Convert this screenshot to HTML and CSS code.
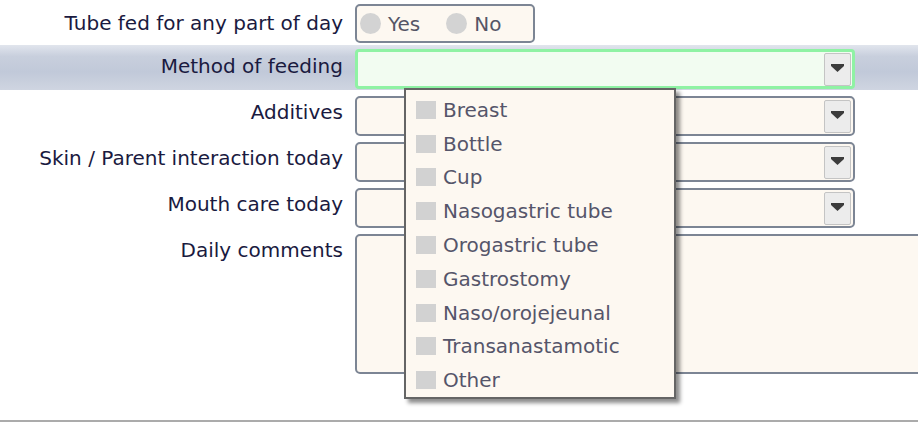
FILE: index.html
```html
<!DOCTYPE html>
<html>
<head>
<meta charset="utf-8">
<link rel="stylesheet" href="styles.css">
</head>
<body>
<div class="form">
  <div class="row row-first">
    <div class="label">Tube fed for any part of day</div>
    <div class="radio-box">
      <span class="radio"></span><span class="opt">Yes</span>
      <span class="radio radio-2"></span><span class="opt">No</span>
    </div>
  </div>
  <div class="row band">
    <div class="label">Method of feeding</div>
    <div class="select select-active">
      <span class="btn"><svg width="13" height="8" viewBox="0 0 13 8"><path d="M0 0h13v2l-6.5 6L0 2z" fill="#3c3c3c"/></svg></span>
    </div>
  </div>
  <div class="row">
    <div class="label">Additives</div>
    <div class="select">
      <span class="btn"><svg width="13" height="8" viewBox="0 0 13 8"><path d="M0 0h13v2l-6.5 6L0 2z" fill="#3c3c3c"/></svg></span>
    </div>
  </div>
  <div class="row">
    <div class="label">Skin / Parent interaction today</div>
    <div class="select">
      <span class="btn"><svg width="13" height="8" viewBox="0 0 13 8"><path d="M0 0h13v2l-6.5 6L0 2z" fill="#3c3c3c"/></svg></span>
    </div>
  </div>
  <div class="row">
    <div class="label">Mouth care today</div>
    <div class="select">
      <span class="btn"><svg width="13" height="8" viewBox="0 0 13 8"><path d="M0 0h13v2l-6.5 6L0 2z" fill="#3c3c3c"/></svg></span>
    </div>
  </div>
  <div class="row">
    <div class="label">Daily comments</div>
    <div class="textarea"></div>
  </div>
  <div class="rule"></div>

  <ul class="menu">
    <li><span class="check"></span>Breast</li>
    <li><span class="check"></span>Bottle</li>
    <li><span class="check"></span>Cup</li>
    <li><span class="check"></span>Nasogastric tube</li>
    <li><span class="check"></span>Orogastric tube</li>
    <li><span class="check"></span>Gastrostomy</li>
    <li><span class="check"></span>Naso/orojejeunal</li>
    <li><span class="check"></span>Transanastamotic</li>
    <li><span class="check"></span>Other</li>
  </ul>
</div>
</body>
</html>
```

FILE: styles.css
```css
html, body {
  margin: 0;
  padding: 0;
  background: #ffffff;
  overflow: hidden;
}
body {
  font-family: "DejaVu Sans", Verdana, sans-serif;
  font-size: 20px;
  color: #1a1a40;
}
.form {
  position: relative;
  width: 918px;
  height: 422px;
  padding-top: 4px;
  box-sizing: border-box;
}
.row {
  display: grid;
  grid-template-columns: 343px 1fr;
  column-gap: 12px;
  margin-top: 6px;
}
.row-first {
  margin-top: 0;
}
.label {
  text-align: right;
  line-height: 24px;
  padding-top: 4px;
  white-space: nowrap;
}
.row-first .label {
  padding-top: 7px;
}
.radio-box {
  width: 180px;
  height: 39px;
  box-sizing: border-box;
  border: 2px solid #7c8594;
  border-radius: 5px;
  background: #fdf8f1;
  display: flex;
  align-items: center;
  padding-left: 3px;
  color: #555566;
}
.radio {
  width: 21px;
  height: 21px;
  border-radius: 50%;
  background: #d3d3d3;
  margin-right: 7px;
}
.radio-2 {
  margin-left: 26px;
}
.opt {
  line-height: 24px;
}
.band {
  margin-top: 2px;
  padding: 4px 0 1px;
  background: linear-gradient(#e1e5ed 0%, #c8cfdd 25%, #c1c9d9 60%, #cfd5e1 100%);
}
.band .label {
  padding-top: 5px;
}
.select {
  position: relative;
  width: 500px;
  height: 40px;
  box-sizing: border-box;
  border: 2px solid #7c8594;
  border-radius: 5px;
  background: #fdf8f1;
  display: flex;
  justify-content: flex-end;
  align-items: center;
  padding-right: 2px;
}
.select-active {
  border: 3px solid #8ff2a4;
  border-radius: 4px;
  background: #f2fcf1;
  padding-right: 1px;
}
.btn {
  width: 27px;
  height: 33px;
  box-sizing: border-box;
  border: 1px solid #c4c4c4;
  border-radius: 2px;
  background: #ececec;
  display: flex;
  align-items: center;
  justify-content: center;
}
.btn svg {
  display: block;
  margin-top: -2px;
}
.textarea {
  width: 600px;
  height: 140px;
  box-sizing: border-box;
  border: 2px solid #7c8594;
  border-radius: 5px;
  background: #fdf8f1;
}
.rule {
  margin-top: 46px;
  height: 2px;
  background: #ababab;
}
.menu {
  position: absolute;
  left: 404px;
  top: 88px;
  width: 272px;
  box-sizing: border-box;
  margin: 0;
  padding: 3px 0 0;
  list-style: none;
  background: #fdf8f1;
  border: 2px solid #656565;
  box-shadow: 4px 4px 4px rgba(0, 0, 0, 0.45);
  color: #55556a;
}
.menu li {
  height: 33.8px;
  display: flex;
  align-items: center;
  padding-left: 10px;
  white-space: nowrap;
}
.check {
  width: 20px;
  height: 18px;
  background: #d2d2d2;
  margin-right: 7px;
  flex: none;
}
```
